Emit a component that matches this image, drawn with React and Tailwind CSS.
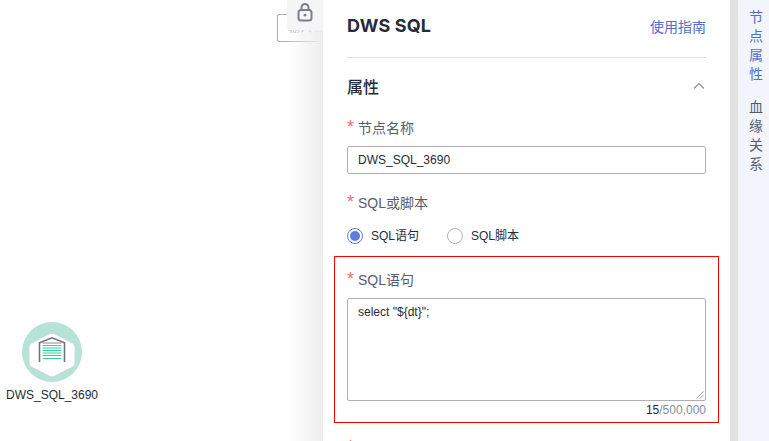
const FONT = "font-['Liberation_Sans','Noto_Sans_CJK_SC',sans-serif]";

const Label = ({ children }) => (
    <div className="flex items-center h-[20px] text-[14px] text-[#575d6c]">
        <span className="w-[11px] text-[#f66f6a] text-[18px] leading-[20px] mt-[-2px]">*</span>
        <span>{children}</span>
    </div>
);

const NodeIcon = () => (
    <svg width="60" height="60" viewBox="0 0 60 60">
        <circle cx="30" cy="30" r="30" fill="#b5e3d6" />
        <path d="M27.5 11.8 Q30 10.5 32.5 11.8 L50.5 21 Q53 22.3 53 25 V41 Q53 43.7 50.5 45 L32.5 54.2 Q30 55.5 27.5 54.2 L9.5 45 Q7 43.7 7 41 V25 Q7 22.3 9.5 21 Z" fill="#fff" stroke="#d5d7da" strokeWidth="1" />
        <path d="M17.5 40 V20.8 L30 15.8 L42.5 20.8 V40" fill="none" stroke="#6f7480" strokeWidth="1.6" />
        <path d="M20.5 21 H39.5" stroke="#8a8e99" strokeWidth="1" fill="none" />
        <g stroke="#2fd39a" strokeWidth="1">
            <path d="M20.5 23.5 H39.5" />
            <path d="M20.5 26 H39.5" />
            <path d="M20.5 28.5 H39.5" />
            <path d="M20.5 31 H39.5" />
            <path d="M20.5 33.5 H39.5" />
            <path d="M20.5 36.5 H39.5" />
        </g>
    </svg>
);

const Radio = ({ checked, label }) => (
    <div className="flex items-center gap-[8px]">
        <span className={`w-[16px] h-[16px] rounded-full border flex items-center justify-center bg-white ${checked ? 'border-[#5e7ce0]' : 'border-[#adb0b8]'}`}>
            {checked && <span className="w-[10px] h-[10px] rounded-full bg-[#5e7ce0]" />}
        </span>
        <span className="text-[12px] text-[#252b3a]">{label}</span>
    </div>
);

export default function App() {
    return (
        <div className={`${FONT} relative w-[769px] h-[441px] overflow-hidden bg-white flex`}>
            {/* canvas */}
            <div className="relative w-[323px] h-full shrink-0">
                <div className="absolute left-[277px] top-[14px] w-[60px] h-[28px] rounded-[2px] border border-[#adb0b8] bg-white overflow-hidden pl-[10px] text-[12px] leading-[26px] text-[#adb0b8]">
                    输入名称
                </div>
                <div className="absolute left-[287px] top-0 w-[36px] h-full bg-gradient-to-r from-white/10 to-[#eeeeee]" />
                <div className="absolute left-[287px] top-0 w-[36px] h-[30px] bg-[#f5f5f6] flex justify-center pt-[2px]">
                    <svg width="18" height="20" viewBox="0 0 18 20" fill="none" className="mr-[1px]">
                        <rect x="2.5" y="8" width="13" height="10.5" rx="2.5" stroke="#7a7f8b" strokeWidth="2" />
                        <path d="M5.5 8 V5.5 a3.5 3.5 0 0 1 7 0 V8" stroke="#7a7f8b" strokeWidth="2" />
                        <circle cx="9" cy="13.2" r="1.4" fill="#7a7f8b" />
                    </svg>
                </div>
                <div className="absolute left-[22px] top-[322px]">
                    <NodeIcon />
                </div>
                <div className="absolute left-0 top-[387px] w-[104px] text-center text-[12px] leading-[16px] text-[#252b3a]">
                    DWS_SQL_3690
                </div>
            </div>

            {/* property panel */}
            <div className="relative z-10 w-[407px] h-full shrink-0 bg-white px-[24px] overflow-hidden">
                <div className="h-[58px] border-b border-[#dfe1e6] flex items-start justify-between pt-[14px]">
                    <span className="text-[18px] leading-[24px] font-bold tracking-[0.15px] text-[#252b3a] font-['Inter',sans-serif]">DWS SQL</span>
                    <span className="text-[14px] leading-[26px] text-[#526ecc]">使用指南</span>
                </div>
                <div className="h-[60px] flex items-center justify-between">
                    <span className="text-[16px] font-medium text-[#252b3a]">属性</span>
                    <svg width="12" height="8" viewBox="0 0 12 8" fill="none" className="mr-[1px] mb-[4px]">
                        <path d="M1 6.5 L6 1.5 L11 6.5" stroke="#8a8e99" strokeWidth="1.2" />
                    </svg>
                </div>
                <Label>节点名称</Label>
                <div className="mt-[8px] h-[28px] rounded-[2px] border border-[#adb0b8] pl-[10px] text-[12px] leading-[26px] text-[#252b3a]">
                    DWS_SQL_3690
                </div>
                <div className="mt-[19px]"><Label>SQL或脚本</Label></div>
                <div className="mt-[11px] h-[24px] flex items-center gap-[28px]">
                    <Radio checked label="SQL语句" />
                    <Radio label="SQL脚本" />
                </div>
                <div className="mt-[8px] mx-[-13px] h-[167px] border border-[#ff0000] px-[12px] pt-[13px]">
                    <Label>SQL语句</Label>
                    <div className="relative mt-[8px] h-[103px] rounded-[2px] border border-[#adb0b8] px-[10px] py-[5px] text-[12px] leading-[16px] text-[#252b3a]">
                        select "${'{'}dt{'}'}";
                        <svg width="8" height="8" viewBox="0 0 8 8" className="absolute right-[1px] bottom-[1px]" stroke="#9a9da5" strokeWidth="1">
                            <path d="M0.5 7.5 L7.5 0.5" />
                            <path d="M4 7.5 L7.5 4" />
                        </svg>
                    </div>
                    <div className="mt-[2px] text-right text-[12px] leading-[14px] text-[#8a8e99]">
                        <span className="text-[#252b3a]">15</span>/500,000
                    </div>
                </div>
                <div className="mt-[15px]"><Label /></div>
            </div>

            {/* scrollbar gutter */}
            <div className="w-[8px] h-full shrink-0 bg-[#e2e2e2]" />

            {/* side tabs */}
            <div className="flex-1 h-full bg-[#f2f5fc] flex flex-col pl-[11px] pt-[8px] text-[14px] leading-[19px]">
                <div className="w-[14px] text-[#526ecc]">节点属性</div>
                <div className="w-[14px] mt-[14px] text-[#575d6c]">血缘关系</div>
            </div>
        </div>
    );
}
